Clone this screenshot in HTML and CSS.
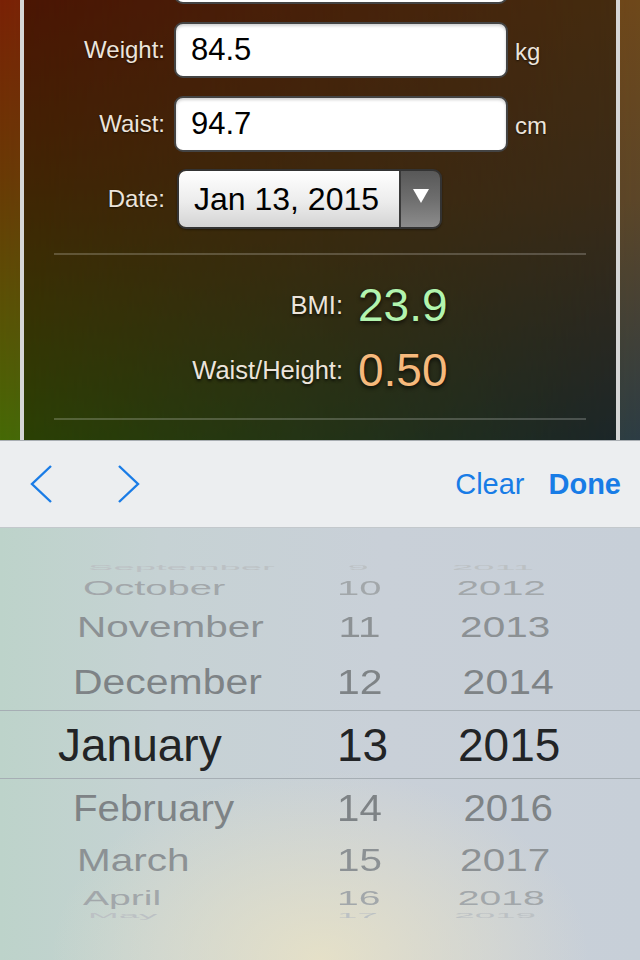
FILE: index.html
```html
<!DOCTYPE html>
<html lang="en">
<head>
    <meta charset="UTF-8">
    <meta name="viewport" content="width=device-width, initial-scale=1.0">
    <title>BMI</title>
    <link rel="stylesheet" href="styles.css">
</head>
<body>
    <div class="screen">
        <!-- form area, scrolled so the height row is cut off -->
        <div class="content">
            <div class="panel">
                <div class="form">
                    <div class="row">
                        <span class="label"></span>
                        <div class="field"></div>
                    </div>
                    <div class="row">
                        <span class="label">Weight:</span>
                        <div class="field">84.5</div>
                        <span class="unit">kg</span>
                    </div>
                    <div class="row">
                        <span class="label">Waist:</span>
                        <div class="field">94.7</div>
                        <span class="unit">cm</span>
                    </div>
                    <div class="row row-date">
                        <span class="label">Date:</span>
                        <div class="select">
                            <span class="select-text">Jan 13, 2015</span>
                            <span class="select-btn">
                                <svg width="18" height="16" viewBox="0 0 18 16"><path d="M1 1 H17 L9 15 Z" fill="#fff"/></svg>
                            </span>
                        </div>
                    </div>
                </div>

                <div class="divider"></div>

                <div class="results">
                    <div class="res-label">BMI:</div>
                    <div class="res-value bmi">23.9</div>
                    <div class="res-label">Waist/Height:</div>
                    <div class="res-value ratio">0.50</div>
                </div>

                <div class="divider"></div>
            </div>
        </div>

        <!-- keyboard toolbar -->
        <div class="toolbar">
            <svg class="chev" width="24" height="40" viewBox="0 0 24 40"><path d="M21 2 L2 20 L21 38" /></svg>
            <svg class="chev chev-next" width="24" height="40" viewBox="0 0 24 40"><path d="M3 2 L22 20 L3 38" /></svg>
            <span class="tb-btn">Clear</span>
            <span class="tb-btn tb-done">Done</span>
        </div>

        <!-- date wheel -->
        <div class="picker">
            <div class="wheel-row r-sep"><span class="m">September</span><span class="d">9</span><span class="y">2011</span></div>
            <div class="wheel-row r-oct"><span class="m">October</span><span class="d">10</span><span class="y">2012</span></div>
            <div class="wheel-row r-nov"><span class="m">November</span><span class="d">11</span><span class="y">2013</span></div>
            <div class="wheel-row r-dec"><span class="m">December</span><span class="d">12</span><span class="y">2014</span></div>
            <div class="wheel-row r-sel"><span class="m">January</span><span class="d">13</span><span class="y">2015</span></div>
            <div class="wheel-row r-feb"><span class="m">February</span><span class="d">14</span><span class="y">2016</span></div>
            <div class="wheel-row r-mar"><span class="m">March</span><span class="d">15</span><span class="y">2017</span></div>
            <div class="wheel-row r-apr"><span class="m">April</span><span class="d">16</span><span class="y">2018</span></div>
            <div class="wheel-row r-may"><span class="m">May</span><span class="d">17</span><span class="y">2019</span></div>
        </div>
    </div>
</body>
</html>
```

FILE: styles.css
```css
*{
    margin: 0;
    padding: 0;
    box-sizing: border-box;
}
body{
    font-family: "Liberation Sans", Arial, sans-serif;
    background: #000;
}
.screen{
    width: 640px;
    height: 960px;
    overflow: hidden;
}

/* top part */
.content{
    position: relative;
    height: 440px;
    overflow: hidden;
    background: linear-gradient(#7a2206 0%, #6a3a06 40%, #5a5206 70%, #466a06 100%);
}
.content::before{
    content: "";
    position: absolute;
    inset: 0;
    background: linear-gradient(#6e481a 0%, #5c4628 45%, #2c3c44 100%);
    -webkit-mask-image: linear-gradient(to right, transparent 0%, #000 100%);
    mask-image: linear-gradient(to right, transparent 0%, #000 100%);
}
.panel{
    position: relative;
    display: flow-root;
    height: 100%;
    margin: 0 20px;
    border-left: 4px solid #d6d6d6;
    border-right: 4px solid #d6d6d6;
    background: rgba(0,0,0,.38);
}
.form{
    display: flex;
    flex-direction: column;
    gap: 18px;
    margin-top: -52px;
}
.row{
    display: flex;
    align-items: center;
    height: 56px;
}
.row-date{
    height: 60px;
    margin-top: -1px;
}
.label{
    width: 141px;
    margin-right: 9px;
    text-align: right;
    font-size: 24px;
    color: #ece4db;
    text-shadow: 0 1px 2px rgba(0,0,0,.6);
}
.field{
    width: 334px;
    height: 56px;
    padding-left: 15px;
    border: 2px solid #444;
    border-radius: 9px;
    background: #fff;
    box-shadow: inset 0 2px 3px rgba(0,0,0,.18);
    font-size: 31px;
    line-height: 52px;
    color: #000;
}
.unit{
    margin-left: 7px;
    padding-top: 4px;
    font-size: 24px;
    color: #ece4db;
    text-shadow: 0 1px 2px rgba(0,0,0,.6);
}
.select{
    display: flex;
    width: 265px;
    height: 60px;
    margin-left: 3px;
    border: 2px solid #333;
    border-radius: 9px;
    overflow: hidden;
    box-shadow: 0 1px 2px rgba(0,0,0,.4);
}
.select-text{
    width: 222px;
    padding-left: 15px;
    background: linear-gradient(#ffffff 0%, #ececec 55%, #d4d4d4 100%);
    border-right: 2px solid #3a3a3a;
    font-size: 32px;
    line-height: 56px;
    color: #000;
}
.select-btn{
    flex: 1;
    display: flex;
    justify-content: center;
    padding-top: 17px;
    background: linear-gradient(#585858 0%, #6e6e6e 50%, #8c8c8c 100%);
}
.divider{
    height: 2px;
    margin: 24px 30px 0;
    background: rgba(255,255,255,.2);
}
.results{
    display: grid;
    grid-template-columns: 319px auto;
    grid-auto-rows: 56px;
    column-gap: 15px;
    row-gap: 9px;
    align-items: center;
    padding: 22px 0 20px;
}
.results + .divider{
    margin-top: 0;
}
.res-label{
    text-align: right;
    font-size: 25.5px;
    color: #ece4db;
    text-shadow: 0 2px 3px rgba(0,0,0,.7);
}
.res-value{
    font-size: 46px;
    line-height: 1;
    text-shadow: 0 2px 4px rgba(0,0,0,.75);
}
.bmi{
    color: #b2f4ae;
}
.ratio{
    color: #f6b97c;
}

/* toolbar */
.toolbar{
    display: flex;
    align-items: center;
    height: 88px;
    padding: 0 19px 0 30px;
    border-top: 1px solid #a9aeb3;
    border-bottom: 1px solid #c3c8cc;
    background: #eceef0;
}
.chev path{
    fill: none;
    stroke: #1a7ce6;
    stroke-width: 2.4;
}
.chev-next{
    margin-left: 62px;
}
.tb-btn{
    font-size: 29px;
    color: #187ce6;
}
.tb-btn:first-of-type{
    margin-left: auto;
}
.tb-done{
    margin-left: 24px;
    font-weight: bold;
}

/* wheel */
.picker{
    height: 432px;
    padding-top: 32px;
    background:
        radial-gradient(ellipse 270px 190px at 50% 100%, rgba(236,228,196,.8), rgba(236,228,196,0)),
        linear-gradient(to right, #bdd3ca 0%, #c6d2d4 25%, #c9d0d8 60%, #c7cfd8 100%);
}
.wheel-row{
    display: flex;
    align-items: center;
    height: var(--h);
    padding-left: 58px;
    font-size: 46px;
    line-height: 1;
    white-space: nowrap;
    color: var(--c);
}
.wheel-row .m{
    width: 279px;
    transform: translateX(var(--mx)) scale(var(--sx), var(--sy));
    transform-origin: left center;
}
.wheel-row .d{
    width: 51px;
    margin-right: 70px;
    text-align: center;
    transform: scale(var(--sx), var(--sy));
    transform-origin: left center;
}
.wheel-row .y{
    width: 102px;
    text-align: center;
    transform: translateX(var(--yx)) scale(var(--sx), var(--sy));
    transform-origin: center;
}
.r-sep{ --h: 16px; --mx: 30px; --yx: -16px; --sx: .83; --sy: .15; --c: #bcc1c4; }
.r-oct{ --h: 24px; --mx: 25px; --yx: -8px; --sx: .87; --sy: .42; --c: #a2a7aa; }
.r-nov{ --h: 54px; --mx: 19px; --yx: -4px; --sx: .88; --sy: .64; --c: #8c9194; }
.r-dec{ --h: 56px; --mx: 15px; --yx: -1px; --sx: .89; --sy: .78; --c: #7e8386; }
.r-sel{ --h: 69px; --mx: 0px; --yx: 0px; --sx: 1; --sy: 1; --c: #222426;
    border-top: 1px solid #a6aeb4;
    border-bottom: 1px solid #a6aeb4;
}
.r-feb{ --h: 57px; --mx: 15px; --yx: -1px; --sx: .875; --sy: .8; --c: #7e8386; }
.r-mar{ --h: 48px; --mx: 19px; --yx: -4px; --sx: .88; --sy: .67; --c: #8c9194; }
.r-apr{ --h: 28px; --mx: 25px; --yx: -8px; --sx: .85; --sy: .42; --c: #a2a7aa; }
.r-may{ --h: 8px; --mx: 30px; --yx: -14px; --sx: .8; --sy: .15; --c: #bcc1c4; }
```
